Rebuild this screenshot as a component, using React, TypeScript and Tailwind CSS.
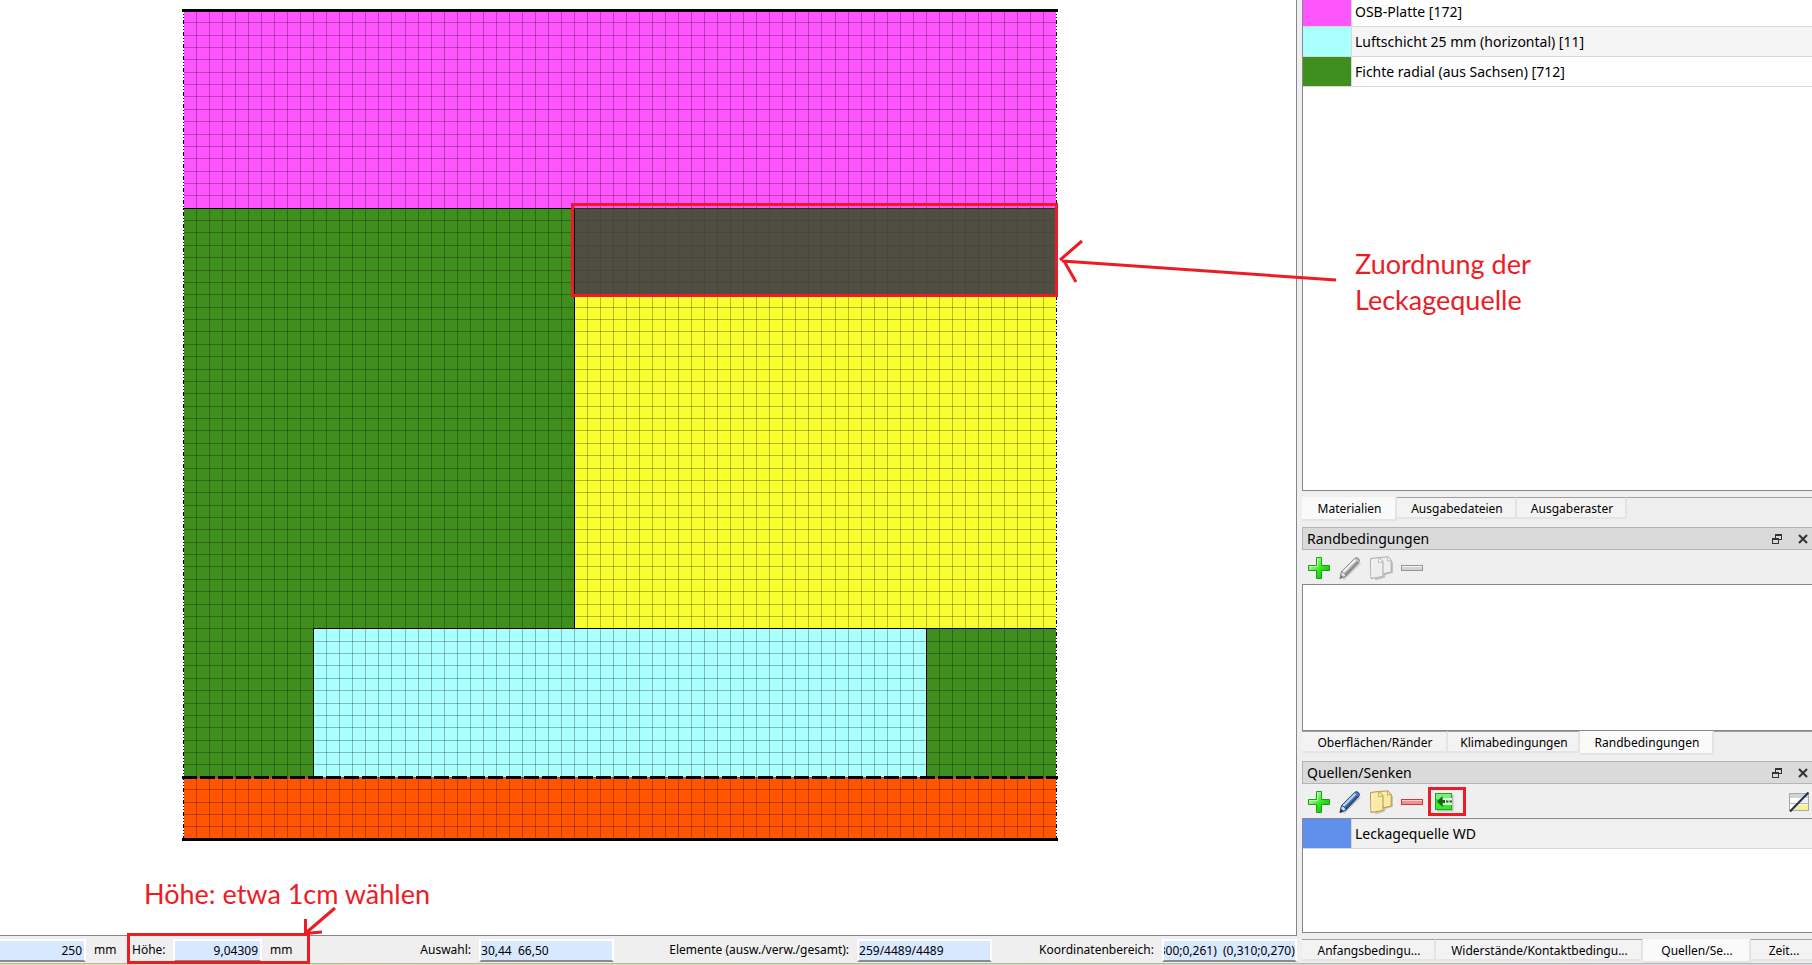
import { clsx } from "clsx";
import { useEffect, useRef, type ReactNode } from "react";

const COLS = 67;
const ROWS = 67;
const colX = (i: number) => Math.round(1 + i * 13.03);
const rowY = (i: number) => Math.floor(1.32 + i * 12.37);

type Region = { color: string; c0: number; c1: number; r0: number; r1: number };

const regions: Region[] = [
  { color: "#3f8f1f", c0: 0, c1: 67, r0: 16, r1: 62 },
  { color: "#ff55ff", c0: 0, c1: 67, r0: 0, r1: 16 },
  { color: "#f8ff2e", c0: 30, c1: 67, r0: 16, r1: 50 },
  { color: "#aaffff", c0: 10, c1: 57, r0: 50, r1: 62 },
  { color: "#ff5500", c0: 0, c1: 67, r0: 62, r1: 67 }
];

type Item = { name: string; swatch: string; row: string };

const materials: Item[] = [
  { name: "OSB-Platte [172]", swatch: "bg-[#ff55ff]", row: "bg-white" },
  { name: "Luftschicht 25 mm (horizontal) [11]", swatch: "bg-[#aaffff]", row: "bg-[#f5f5f5]" },
  { name: "Fichte radial (aus Sachsen) [712]", swatch: "bg-[#3f8f1f]", row: "bg-white" }
];

const sources: Item[] = [
  { name: "Leckagequelle WD", swatch: "bg-[#6090ec]", row: "bg-[#f0f0f0]" }
];

function ConstructionView() {
  const cols = Array.from({ length: COLS - 1 }, (_, i) => i + 1);
  const rows = Array.from({ length: ROWS - 1 }, (_, i) => i + 1);
  const right = colX(COLS);

  return (
    <svg width="876" height="832" viewBox="0 0 876 832" shapeRendering="crispEdges" className="block" role="img" aria-label="Konstruktion">
      {regions.map((r) => (
        <rect
          key={r.color}
          x={colX(r.c0) + (r.c0 === 0 ? 1 : 0)}
          y={rowY(r.r0)}
          width={colX(r.c1) - colX(r.c0) - (r.c0 === 0 ? 1 : 0)}
          height={rowY(r.r1) - rowY(r.r0)}
          fill={r.color}
        />
      ))}
      <rect x={colX(30)} y={rowY(16)} width={right - colX(30)} height={rowY(23) - rowY(16)} fill="#4f4e41" />
      <g fill="#000" fillOpacity="0.27">
        {cols.map((i) => (
          <g key={i}>
            {i < 30 ? (
              <rect x={colX(i)} y="2" width="1" height="828" />
            ) : (
              <>
                <rect x={colX(i)} y="2" width="1" height={rowY(16) - 2} />
                <rect x={colX(i)} y={rowY(16)} width="1" height={rowY(23) - rowY(16)} fillOpacity="0.08" />
                <rect x={colX(i)} y={rowY(23)} width="1" height={830 - rowY(23)} />
              </>
            )}
          </g>
        ))}
        {rows.map((i) => {
          const selected = i > 16 && i < 23;
          return (
            <g key={i}>
              <rect x="2" y={rowY(i)} width={selected ? colX(30) - 2 : right - 2} height="1" />
              {selected && <rect x={colX(30)} y={rowY(i)} width={right - colX(30)} height="1" fillOpacity="0.08" />}
            </g>
          );
        })}
      </g>
      <g fill="#000">
        <rect x="1" y={rowY(16)} width={colX(30) - 1} height="1" />
        <rect x={colX(30)} y={rowY(16)} width={right - colX(30)} height="1" fill="#2d2c26" />
        <rect x={colX(30)} y={rowY(16)} width="1" height={rowY(50) - rowY(16)} />
        <rect x={colX(10)} y={rowY(50)} width={right - colX(10)} height="1" />
        <rect x={colX(10)} y={rowY(50)} width="1" height={rowY(62) - rowY(50)} />
        <rect x={colX(57)} y={rowY(50)} width="1" height={rowY(62) - rowY(50)} />
        <rect x="0" y="0" width="876" height="3" />
        <rect x="0" y="829" width="876" height="3" />
      </g>
      <path d="M1.5 -1V832M874.5 -1V832" stroke="#000" strokeDasharray="4 2 1 2 1 2" />
      <path d="M0 768.5H876" stroke="#000" strokeWidth="3" strokeDasharray="15 3" />
    </svg>
  );
}

function PlusIcon() {
  return (
    <svg width="24" height="24" viewBox="0 0 24 24" aria-hidden>
      <defs>
        <linearGradient id="plus" x1="0" y1="0" x2="1" y2="1">
          <stop offset="0.2" stopColor="#b5ff9a" />
          <stop offset="0.55" stopColor="#2fe81c" />
          <stop offset="1" stopColor="#00b400" />
        </linearGradient>
      </defs>
      <path d="M9.5 1.5h5v8h8v5h-8v8h-5v-8h-8v-5h8z" fill="url(#plus)" stroke="#16a012" />
      <path d="M10.5 9.5v-7M2.5 10.5h8" stroke="#dcffd0" strokeOpacity="0.8" />
    </svg>
  );
}

function PencilIcon({ muted }: { muted?: boolean }) {
  const dark = muted ? "#858585" : "#24456f";
  return (
    <svg width="24" height="24" viewBox="0 0 24 24" aria-hidden>
      <path d="M5 23 22 6.500" stroke="#000" strokeOpacity="0.15" strokeWidth="3" />
      <path d="M2 22.5 3.6 15.500 16.500 2.6q2-2 4 0t0 4L8 20z" fill={muted ? "#bdbdbd" : "#4d7dba"} stroke={dark} />
      <path d="M5.200 16 17.500 3.700" stroke={muted ? "#f2f2f2" : "#b9d6f5"} strokeWidth="2" />
      <path d="M7.300 19 19.800 6.200" stroke={muted ? "#8a8a8a" : "#28507f"} strokeWidth="2" />
      <path d="M3.600 15.500q3.400 1 4.400 4.500L2 22.500z" fill={muted ? "#e2e2e2" : "#cfdded"} stroke={dark} strokeWidth="0.800" />
      <path d="m2 22.500 1-3.500 2.500 2z" fill={muted ? "#777" : "#10284a"} />
    </svg>
  );
}

function CopyIcon({ muted }: { muted?: boolean }) {
  const fill = muted ? "#eeeeee" : "#fbe9a8";
  const stroke = muted ? "#ababab" : "#b7963d";
  return (
    <svg width="24" height="24" viewBox="0 0 24 24" aria-hidden>
      <path d="M6 23.500 15 21l1-3 7-2V6" fill="none" stroke="#000" strokeOpacity="0.18" strokeWidth="2" />
      <path d="M10.500 1.500 19 .8l3.200 3.700v11.500L14 18z" fill={fill} stroke={stroke} />
      <path d="m19 .8-.6 4.400 3.800-.7z" fill={muted ? "#fff" : "#fff7d8"} stroke={stroke} strokeWidth="0.800" />
      <path d="m1.500 2.500 8.300-1 4.200 4.300v14.700L2 22.500z" fill={fill} stroke={stroke} />
      <path d="M9.800 1.500 9.500 6.500l4.500-.7z" fill={muted ? "#fff" : "#fff7d8"} stroke={stroke} strokeWidth="0.800" />
      <path d="M3 4v17" stroke="#fff" strokeOpacity="0.700" />
    </svg>
  );
}

function MinusIcon({ muted }: { muted?: boolean }) {
  return (
    <svg width="24" height="24" viewBox="0 0 24 24" aria-hidden>
      <rect x="1.500" y="9.500" width="21" height="5" fill={muted ? "#d4d4d4" : "#f98c8c"} stroke={muted ? "#959595" : "#c93a3a"} />
      <path d="M2 10.500h20" stroke={muted ? "#f3f3f3" : "#ffd0d0"} />
    </svg>
  );
}

function AssignIcon() {
  return (
    <svg width="20" height="20" viewBox="0 0 20 20" aria-hidden>
      <path d="M3 18.500h15.500V3" fill="none" stroke="#000" strokeOpacity="0.2" strokeWidth="2" />
      <rect x="1.500" y="1.500" width="16" height="16" fill="#28f028" stroke="#2c9a2c" />
      <rect x="2" y="2" width="15" height="5" fill="#74f574" />
      <path d="M9 6h9v7H9z" fill="#dff8df" />
      <path d="M3 9.500 8.500 4v4H11v3H8.500v4z" fill="#1c6414" />
      <path d="M12 9.500h2.500M15.500 9.500H18" stroke="#1c6414" strokeWidth="2" />
    </svg>
  );
}

function HideViewIcon() {
  return (
    <svg width="22" height="22" viewBox="0 0 22 22" aria-hidden>
      <rect x="1.500" y="2.500" width="19" height="17" fill="#fff" stroke="#a9a9a9" />
      <path d="M2 3h18v4H2z" fill="#d2d2d2" />
      <path d="M10.500 8h9.500v4.500h-9.500z" fill="#efefef" />
      <path d="M6 13.500h14V19H6z" fill="#f8ef9a" />
      <path d="M2 12.500h18" stroke="#b5b5b5" />
      <path d="M2 20.500 20.500 1.500" stroke="#1c2f59" strokeWidth="2" />
    </svg>
  );
}

function DockTitle({ title }: { title: string }) {
  return (
    <header className="flex h-[23px] shrink-0 items-center border border-r-0 border-[#b4b4b4] bg-[#dadada] pl-1 pr-[3px]">
      <h2 className="flex-1 text-[14px] leading-5">{title}</h2>
      <button type="button" aria-label={`${title} abdocken`} className="mr-[14px]">
        <svg width="12" height="12" viewBox="0 0 12 12" shapeRendering="crispEdges" aria-hidden>
          <path d="M4 1.500h7M4.500 1v4M10.500 1v6M8 6.500h3M1 5.500h7M1.500 5v6M7.500 5v6M1 10.500h7" stroke="#333" fill="none" />
          <path d="M4 1h7v2H4zM1 5h7v2H1z" fill="#333" />
        </svg>
      </button>
      <button type="button" aria-label={`${title} schließen`}>
        <svg width="12" height="12" viewBox="0 0 12 12" aria-hidden>
          <path d="m2 2 8 8M10 2l-8 8" stroke="#333" strokeWidth="2" />
        </svg>
      </button>
    </header>
  );
}

type Tab = { label: string; width: string };

function TabBar({ tabs, active, label }: { tabs: Tab[]; active: number; label: string }) {
  return (
    <div role="tablist" aria-label={label} className="flex h-6 shrink-0 items-start overflow-hidden text-[12px]">
      {tabs.map((tab, i) => (
        <button
          key={tab.label}
          type="button"
          role="tab"
          aria-selected={i === active}
          className={clsx(
            "shrink-0 whitespace-nowrap border-b-2 border-r-2 border-[#e4e4e4] pl-0.5 pt-0.5 text-center",
            tab.width,
            i === active ? "h-6 bg-[#fafafa]" : "h-[22px] border-t border-t-[#a0a0a0] bg-[#f3f3f3]"
          )}
        >
          {tab.label}
        </button>
      ))}
      <span className="h-px flex-1 bg-[#a0a0a0]" />
    </div>
  );
}

function ItemTable({ items, label }: { items: Item[]; label: string }) {
  return (
    <table aria-label={label} className="w-full border-separate border-spacing-0 text-[14px]">
      <tbody>
        {items.map((item) => (
          <tr key={item.name} className={clsx("h-[30px]", item.row)}>
            <td className={clsx("w-[49px] border-b border-r border-[#d8d8d8] bg-clip-padding p-0", item.swatch)} />
            <td className="border-b border-[#d8d8d8] p-0 pl-[3px] leading-5">{item.name}</td>
          </tr>
        ))}
      </tbody>
    </table>
  );
}

function ToolButton({ label, disabled, children }: { label: string; disabled?: boolean; children: ReactNode }) {
  return (
    <button type="button" aria-label={label} disabled={disabled}>
      {children}
    </button>
  );
}

type FieldProps = { id: string; label?: string; value: string; className: string; labelWidth?: string; unit?: string };

function StatusField({ id, label, value, className, labelWidth, unit }: FieldProps) {
  const input = useRef<HTMLInputElement>(null);

  // long values stay scrolled to their end
  useEffect(() => {
    if (input.current) input.current.scrollLeft = input.current.scrollWidth;
  }, []);

  return (
    <div className="flex shrink-0 items-center">
      {label && (
        <label htmlFor={id} className={clsx("mr-2 whitespace-nowrap", labelWidth)}>
          {label}
        </label>
      )}
      <input
        ref={input}
        id={id}
        readOnly
        aria-label={label ? undefined : "Breite"}
        defaultValue={value}
        className={clsx("h-[23px] border-2 border-white border-b-[#8c8c8c] bg-[#d7e8ff] outline-none", className)}
      />
      {unit && <span className="ml-2 w-[22px]">{unit}</span>}
    </div>
  );
}

function StatusBar() {
  return (
    <footer className="flex h-[27px] shrink-0 items-center overflow-hidden pt-px text-[12px]">
      <StatusField id="width" value="250" unit="mm" className="w-[86px] border-l-0 pr-0.5 text-right" />
      <div className="ml-4">
        <StatusField id="height" label="Höhe:" value="9,04309" unit="mm" labelWidth="w-[33px]" className="w-[89px] pr-0.5 text-right" />
      </div>
      <div className="flex flex-1 justify-end gap-[47px]">
        <StatusField id="selection" label="Auswahl:" value="30,44  66,50" className="w-[135px]" />
        <StatusField id="elements" label="Elemente (ausw./verw./gesamt):" value="259/4489/4489" labelWidth="w-[188px] text-right" className="w-[135px]" />
        <StatusField id="range" label="Koordinatenbereich:" value="(0,300;0,261)  (0,310;0,270)" className="w-[135px]" />
      </div>
    </footer>
  );
}

function Annotations() {
  return (
    <div className="pointer-events-none absolute inset-0 font-['Lato',sans-serif] text-[27px] leading-9 text-[#ed1c24]">
      <svg width="1812" height="965" viewBox="0 0 1812 965" className="absolute left-0 top-0" fill="none" stroke="#ed1c24" strokeWidth="3" aria-hidden>
        <rect x="572.500" y="204.500" width="484" height="91" />
        <rect x="128.500" y="934.500" width="180" height="28" />
        <rect x="1429.500" y="788.500" width="35" height="26" />
        <path d="M1336 280 1062 261M1082 241 1060 260M1064 261 1076 282" />
        <path d="M335 908 307 932M305.500 919V934M305 933.500 322 932" />
      </svg>
      <p className="absolute left-[1355px] top-[246px] w-[220px]">Zuordnung der Leckagequelle</p>
      <p className="absolute left-[144px] top-[876px] whitespace-nowrap">Höhe: etwa 1cm wählen</p>
    </div>
  );
}

export default function App() {
  return (
    <div className="relative flex h-screen flex-col overflow-hidden bg-[#efefef] font-['Noto_Sans','Open_Sans',sans-serif] text-black">
      <div className="flex min-h-0 flex-1">
        <main className="flex min-w-0 flex-1 flex-col">
          <section className="min-h-0 flex-1 overflow-hidden border-b border-r border-[#868690] bg-white pl-[182px] pt-[9px]">
            <ConstructionView />
          </section>
          <StatusBar />
        </main>

        <aside className="ml-[5px] flex w-[510px] shrink-0 flex-col">
          <section className="min-h-0 flex-1 overflow-hidden border-b border-l border-[#868690] bg-white">
            <div className="-mt-[3px]">
              <ItemTable items={materials} label="Materialien" />
            </div>
          </section>
          <div className="mt-[6px]">
            <TabBar
              label="Projekt"
              active={0}
              tabs={[
                { label: "Materialien", width: "w-[95px]" },
                { label: "Ausgabedateien", width: "w-[120px]" },
                { label: "Ausgaberaster", width: "w-[110px]" }
              ]}
            />
          </div>

          <section className="mt-[6px]">
            <DockTitle title="Randbedingungen" />
            <div className="flex h-[34px] items-center gap-[7px] pl-[5px] pt-0.5">
              <ToolButton label="Hinzufügen"><PlusIcon /></ToolButton>
              <ToolButton label="Bearbeiten" disabled><PencilIcon muted /></ToolButton>
              <ToolButton label="Kopieren" disabled><CopyIcon muted /></ToolButton>
              <ToolButton label="Entfernen" disabled><MinusIcon muted /></ToolButton>
            </div>
            <div className="h-[147px] border-y border-l border-[#868690] bg-white" />
          </section>
          <TabBar
            label="Bedingungen"
            active={2}
            tabs={[
              { label: "Oberflächen/Ränder", width: "w-[146px]" },
              { label: "Klimabedingungen", width: "w-[132px]" },
              { label: "Randbedingungen", width: "w-[134px]" }
            ]}
          />

          <section className="mt-[6px]">
            <DockTitle title="Quellen/Senken" />
            <div className="flex h-[34px] items-center gap-[7px] pl-[5px] pr-[2px] pt-0.5">
              <ToolButton label="Hinzufügen"><PlusIcon /></ToolButton>
              <ToolButton label="Bearbeiten"><PencilIcon /></ToolButton>
              <ToolButton label="Kopieren"><CopyIcon /></ToolButton>
              <ToolButton label="Entfernen"><MinusIcon /></ToolButton>
              <span className="ml-[3px] flex flex-1 items-center justify-between">
                <ToolButton label="Zuordnen"><AssignIcon /></ToolButton>
                <ToolButton label="Ausblenden"><HideViewIcon /></ToolButton>
              </span>
            </div>
            <div className="h-[115px] border-y border-l border-[#868690] bg-white">
              <ItemTable items={sources} label="Quellen/Senken" />
            </div>
          </section>
          <div className="mt-[6px]">
            <TabBar
              label="Modell"
              active={2}
              tabs={[
                { label: "Anfangsbedingu...", width: "w-[134px]" },
                { label: "Widerstände/Kontaktbedingu...", width: "w-[207px]" },
                { label: "Quellen/Se...", width: "w-[108px]" },
                { label: "Zeit...", width: "w-[66px]" }
              ]}
            />
          </div>
        </aside>
      </div>
      <div className="h-0.5 shrink-0 border-t border-[#b9b5a6] bg-linear-to-r from-[#e9e0a4] via-[#cfe3b4] to-[#d6dcec]" />
      <Annotations />
    </div>
  );
}
